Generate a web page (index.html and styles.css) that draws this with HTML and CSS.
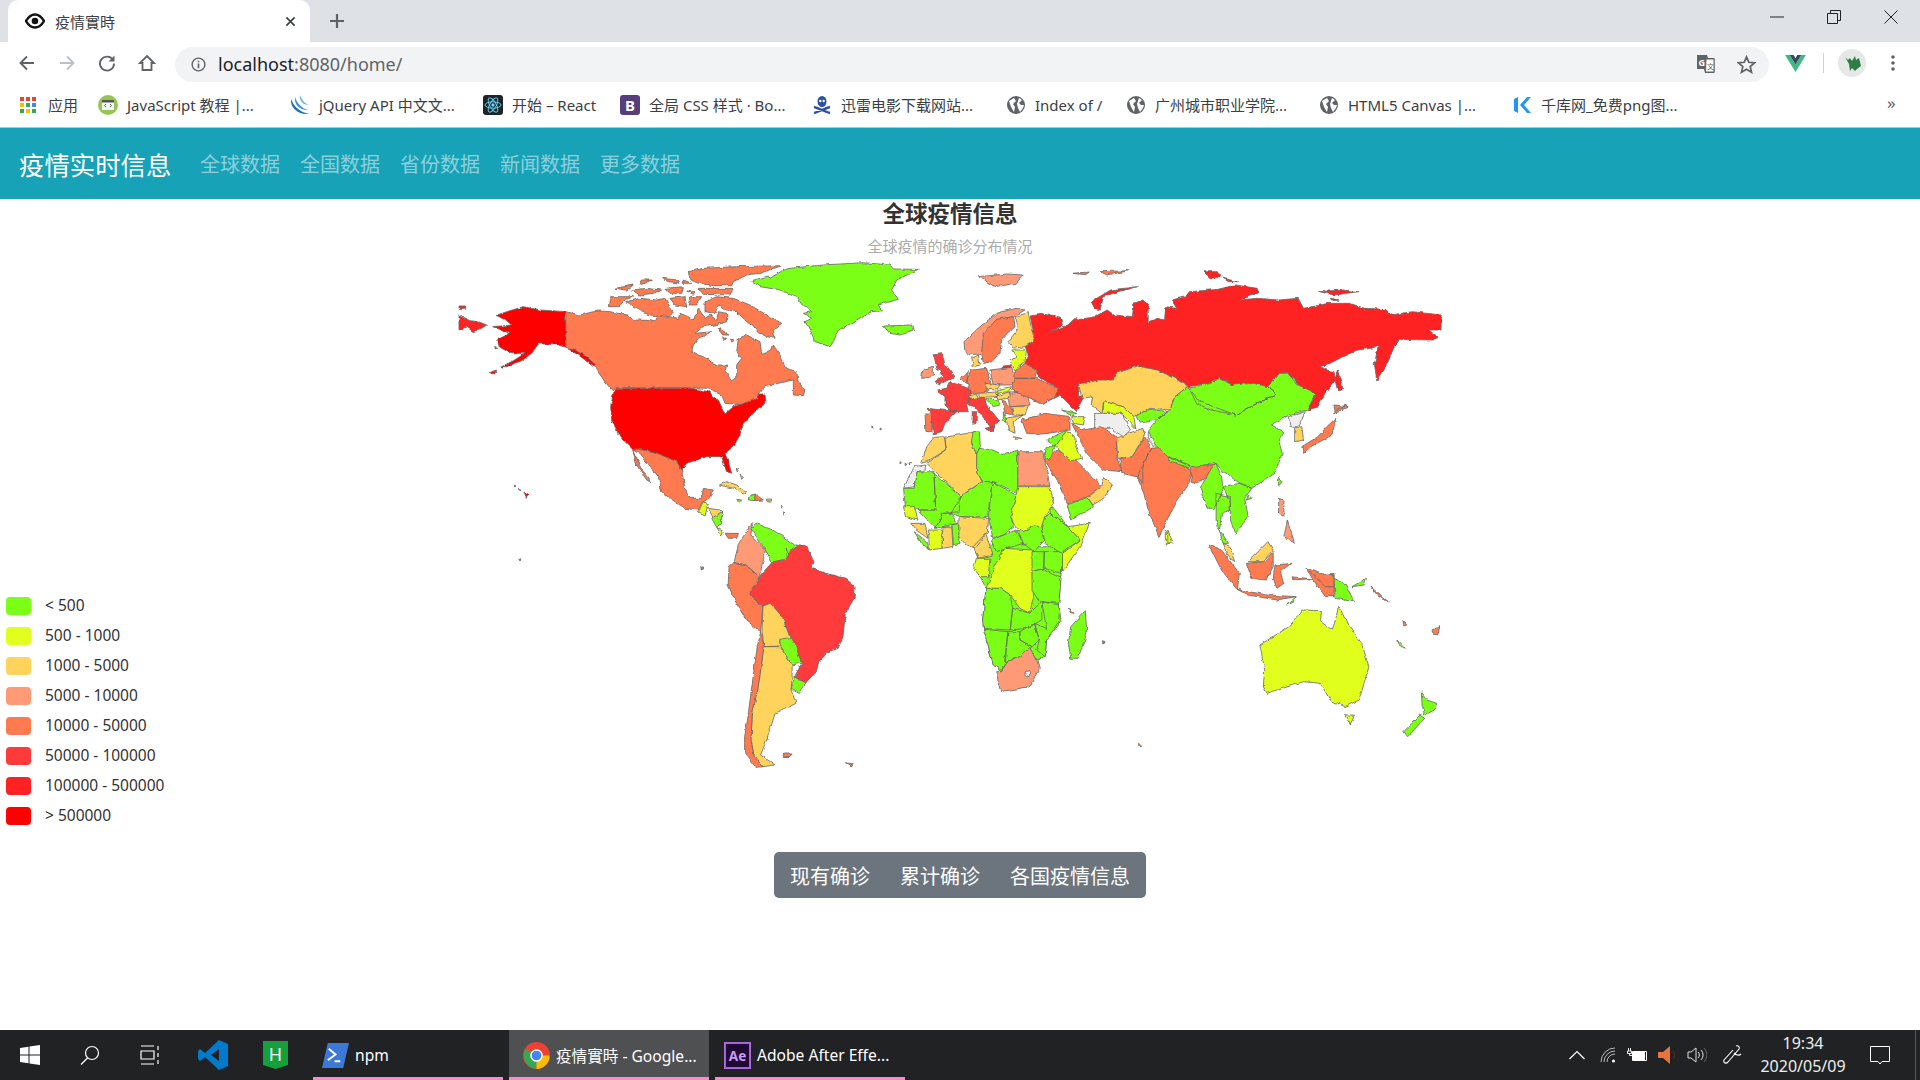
FILE: index.html
```html
<!DOCTYPE html>
<html lang="zh-CN">
<head>
    <meta charset="UTF-8" />
    <title>疫情實時</title>
    <link rel="stylesheet" href="styles.css">
</head>

<body>
    <header class="browser">
        <div class="tabstrip">
            <div class="tab">
                <svg class="tab-icon" viewBox="0 0 20 20"><path d="M1 10C4 5 7 3.500 10 3.500S16 5 19 10C16 15 13 16.500 10 16.500S4 15 1 10Z" fill="none" stroke="#111" stroke-width="2.400"/><circle cx="10" cy="10" r="3.300" fill="#111"/></svg>
                <span class="tab-title">疫情實時</span>
                <svg class="tab-close" viewBox="0 0 12 12"><path d="M1.500 1.500 10.500 10.500M10.500 1.500 1.500 10.500" stroke="#3c4043" stroke-width="1.800"/></svg>
            </div>
            <svg class="tab-new" viewBox="0 0 16 16"><path d="M8 1V15M1 8H15" stroke="#5f6368" stroke-width="2.200"/></svg>
            <div class="window-btns">
                <svg viewBox="0 0 14 14"><path d="M0 7H14" stroke="#222" stroke-width="1"/></svg>
                <svg viewBox="0 0 14 14"><path d="M.5 3.500H10.500V13.500H.5ZM3.500 3.500V.5H13.500V10.500H10.500" fill="none" stroke="#222" stroke-width="1"/></svg>
                <svg viewBox="0 0 14 14"><path d="M.5 .5 13.500 13.500M13.500 .5 .5 13.500" stroke="#222" stroke-width="1"/></svg>
            </div>
        </div>

        <div class="toolbar">
            <svg class="tool" viewBox="0 0 18 18"><path d="M16 9H3M9 2.500 2.500 9 9 15.500" fill="none" stroke="#5f6368" stroke-width="1.900"/></svg>
            <svg class="tool" viewBox="0 0 18 18"><path d="M2 9H15M9 2.500 15.500 9 9 15.500" fill="none" stroke="#bdc1c6" stroke-width="1.900"/></svg>
            <svg class="tool" viewBox="0 0 18 18"><path d="M15 6A7 7 0 1 0 16 9.500" fill="none" stroke="#5f6368" stroke-width="1.900"/><path d="M16.500 1.500V7.500H10.500Z" fill="#5f6368"/></svg>
            <svg class="tool" viewBox="0 0 18 18"><path d="M9 2 16 9H13.500V16H4.500V9H2Z" fill="none" stroke="#5f6368" stroke-width="1.800"/></svg>
            <div class="omnibox">
                <svg class="info" viewBox="0 0 16 16"><circle cx="8" cy="8" r="6.800" fill="none" stroke="#5f6368" stroke-width="1.500"/><path d="M8 7V12M8 4V5.600" stroke="#5f6368" stroke-width="1.700"/></svg>
                <span class="url">localhost<span class="url-rest">:8080/home/</span></span>
                <svg class="omni-translate" viewBox="0 0 20 20"><path d="M1 1H11L12 4H18.500V19H9L8 15H1Z" fill="#5f6368"/><path d="M10 5H18V18H9.500Z" fill="#fff" stroke="#5f6368"/><text x="2.500" y="11.500" class="tr-g">G</text><text x="11" y="15" class="tr-x">文</text></svg>
                <svg class="omni-star" viewBox="0 0 20 20"><path d="M10 2 12.400 7.700 18.500 8.200 13.900 12.200 15.300 18.200 10 15 4.700 18.200 6.100 12.200 1.500 8.200 7.600 7.700Z" fill="none" stroke="#5f6368" stroke-width="1.800"/></svg>
            </div>
            <svg class="ext-vue" viewBox="0 0 22 20"><path d="M0 1H5L11 11 17 1H22L11 19Z" fill="#41b883"/><path d="M5 1H9L11 4.500 13 1H17L11 11Z" fill="#35495e"/></svg>
            <span class="tool-sep"></span>
            <svg class="avatar" viewBox="0 0 28 28"><circle cx="14" cy="14" r="14" fill="#e6e8e6"/><path d="M7 8 10 11 12 9 14 12 17 7 18 11 21 9 23 17 19 20 17 22 14 19 12 22 11 15Z" fill="#2e7d46"/></svg>
            <svg class="dots" viewBox="0 0 6 18"><circle cx="3" cy="3" r="1.800" fill="#5f6368"/><circle cx="3" cy="9" r="1.800" fill="#5f6368"/><circle cx="3" cy="15" r="1.800" fill="#5f6368"/></svg>
        </div>

        <nav class="bookmarks">
            <a class="mark mark-apps">
                <svg class="mark-icon-sm" viewBox="0 0 16 16"><rect width="4" height="4" fill="#ea4335"/><rect x="6" width="4" height="4" fill="#ea4335"/><rect x="12" width="4" height="4" fill="#ea4335"/><rect y="6" width="4" height="4" fill="#fbbc05"/><rect x="6" y="6" width="4" height="4" fill="#34a853"/><rect x="12" y="6" width="4" height="4" fill="#4285f4"/><rect y="12" width="4" height="4" fill="#34a853"/><rect x="6" y="12" width="4" height="4" fill="#fbbc05"/><rect x="12" y="12" width="4" height="4" fill="#34a853"/></svg>
                应用
            </a>
            <a class="mark mark-js">
                <svg class="mark-icon" viewBox="0 0 20 20"><circle cx="10" cy="10" r="10" fill="#95c653"/><rect x="4" y="5" width="12" height="10" fill="#f4f6f1"/><rect x="4" y="5" width="12" height="2.500" fill="#555"/><path d="M8 9 6.500 10.500 8 12M12 9 13.500 10.500 12 12" fill="none" stroke="#555"/></svg>
                JavaScript 教程 |...
            </a>
            <a class="mark mark-jq">
                <svg class="mark-icon" viewBox="0 0 20 20"><path d="M1 4C0 12 7 20 19 19 10 17 4 12 1 4Z" fill="#1b6fb5"/><path d="M5 2C4 9 9 15 18 15 11 13 7 8 5 2Z" fill="#3a93d6"/><path d="M10 0C9 6 13 10 19 10 14 8 12 5 10 0Z" fill="#6cb4e4"/></svg>
                jQuery API 中文文...
            </a>
            <a class="mark mark-react">
                <svg class="mark-icon" viewBox="0 0 20 20"><rect width="20" height="20" rx="3" fill="#20232a"/><circle cx="10" cy="10" r="1.700" fill="#61dafb"/><g fill="none" stroke="#61dafb" stroke-width=".9"><ellipse cx="10" cy="10" rx="8" ry="3.200"/><ellipse cx="10" cy="10" rx="8" ry="3.200" transform="rotate(60 10 10)"/><ellipse cx="10" cy="10" rx="8" ry="3.200" transform="rotate(120 10 10)"/></g></svg>
                开始 – React
            </a>
            <a class="mark mark-bs">
                <svg class="mark-icon" viewBox="0 0 20 20"><rect width="20" height="20" rx="3" fill="#563d7c"/><text x="10" y="16" class="bs-letter">B</text></svg>
                全局 CSS 样式 · Bo...
            </a>
            <a class="mark mark-xl">
                <svg class="mark-icon" viewBox="0 0 20 20"><ellipse cx="10" cy="6.500" rx="4.500" ry="5.500" fill="#2c4f9e"/><circle cx="8.300" cy="6" r="1.200" fill="#fff"/><circle cx="11.700" cy="6" r="1.200" fill="#fff"/><path d="M2 12C6 13 14 17 18 18M18 12C14 13 6 17 2 18" fill="none" stroke="#2c4f9e" stroke-width="2.400"/></svg>
                迅雷电影下载网站...
            </a>
            <a class="mark mark-idx">
                <svg class="mark-icon" viewBox="0 0 20 20"><use href="#globe"/></svg>
                Index of /
            </a>
            <a class="mark mark-gz">
                <svg class="mark-icon" viewBox="0 0 20 20"><use href="#globe"/></svg>
                广州城市职业学院...
            </a>
            <a class="mark mark-h5">
                <svg class="mark-icon" viewBox="0 0 20 20"><use href="#globe"/></svg>
                HTML5 Canvas |...
            </a>
            <a class="mark mark-qk">
                <svg class="mark-icon" viewBox="0 0 20 20"><path d="M2 4 6 2V18L2 16ZM15 2H19L12 10 19 18H15L8 10Z" fill="#2196f3"/></svg>
                千库网_免费png图...
            </a>
            <span class="mark-more">»</span>
        </nav>
        <svg class="defs" width="0" height="0"><defs><g id="globe"><circle cx="10" cy="10" r="9" fill="#5f6368"/><path d="M3 6 8 3 10 6 7 9 9 12 8 17 5 12ZM13 3 16 5 13 8 15 10H18L17 13 14 17 12 13 11 9Z" fill="#fff"/></g></defs></svg>
    </header>

    <div class="navbar">
        <span class="brand">疫情实时信息</span>
        <a class="nav-link">全球数据</a>
        <a class="nav-link">全国数据</a>
        <a class="nav-link">省份数据</a>
        <a class="nav-link">新闻数据</a>
        <a class="nav-link">更多数据</a>
    </div>

    <main class="page">
        <section class="chart">
            <h1 class="chart-title">全球疫情信息</h1>
            <p class="chart-sub">全球疫情的确诊分布情况</p>

            <svg class="worldmap" viewBox="450 255 1000 520" width="1000" height="520">
                <defs>
                    <filter id="coast" filterUnits="userSpaceOnUse" x="450" y="255" width="1000" height="520">
                        <feTurbulence type="fractalNoise" baseFrequency=".16" numOctaves="2" seed="4" result="noise"/>
                        <feDisplacementMap in="SourceGraphic" in2="noise" scale="3.500" xChannelSelector="R" yChannelSelector="G"/>
                        <feGaussianBlur stdDeviation=".4"/>
                    </filter>
                </defs>
                <g filter="url(#coast)">
                <!-- canada -->
                <g transform="translate(590 255) scale(.33333)">
                    <path class="c5" d="M-73 170 -30 180 10 170 30 168 60 170 85 175 110 180 125 190 140 195 170 196 195 200 205 180 225 188 240 185 265 190 270 175 295 185 310 195 325 160 345 190 360 180 380 195 385 170 410 175 410 200 375 210 340 215 315 235 365 230 345 240 325 250 310 270 305 290 325 300 340 305 365 322 385 330 410 330 405 350 425 378 440 365 440 330 455 310 440 290 445 250 470 240 490 250 510 260 515 295 545 285 550 270 570 300 590 340 620 350 625 380 645 405 640 422 610 420 610 375 585 380 565 385 525 395 505 420 510 430 465 450 405 445 395 420 350 400 300 398H75L65 405 45 380 20 345 0 315 -35 295 -73 277Z"/>
                    <path class="c5" d="M345 140 380 125 430 130 455 140 480 150 505 165 530 180 575 205 550 225 555 250 530 245 510 235 490 215 470 200 440 170 410 165 385 150 375 175 345 170ZM385 220 420 240H395ZM395 248 410 250 400 256ZM422 252 433 255 426 262ZM60 125H130L105 135 85 155H55ZM110 140 150 130 200 135 225 130 250 175 240 185 180 180 140 160ZM75 100 130 90 110 105ZM125 105 170 100 215 105 190 115 150 120ZM215 70 265 75 270 85 235 80ZM155 75H185L150 90ZM280 75 305 85H280ZM225 100 280 95 275 115H240ZM240 130 285 125 290 155 255 150ZM300 125H335L320 150H295ZM295 50 340 40 440 35 575 32 510 55 470 60 430 80 425 92 370 92 330 85 300 75ZM325 100H430L420 120 340 118ZM290 108 315 110 310 118Z"/>
                </g>

                <!-- rest of the americas -->
                <g transform="translate(450 190) scale(.33333)">
                    <path class="c7" d="M27 377 60 392 85 395 110 405 95 415 70 425 50 410 27 420ZM27 348H47V355H27Z"/>
                    <path class="c8" d="M347 365V472L375 478 410 500 437 525 430 530 405 510 385 495 347 472 320 465 290 462 265 462 245 490 215 512 170 530 155 530 190 512 225 490 200 490 175 487 148 470 140 450 180 430 160 422 128 410 185 405 165 388 138 376 180 362 220 350 270 360ZM115 548 140 540 130 552ZM150 532 165 528 158 535ZM133 470 147 472 140 477ZM222 906 235 912 229 922Z"/>
                    <path class="c1" d="M905 272 955 258 960 265 1000 240 1020 235 1120 225 1240 218 1320 225 1330 237 1405 238 1340 270 1325 300 1345 328 1320 335 1285 345 1300 362 1265 365 1240 378 1195 405 1165 420 1150 455 1140 470 1095 455 1085 430 1065 395 1085 385 1060 370 1085 365 1060 345 1040 320 990 300 930 290ZM1300 408 1385 405 1390 420 1350 435 1320 430Z"/>
                    <path class="c8" d="M497 595H725L775 605 805 630 825 672 850 650 895 635 925 625V612H945L948 640 925 655 900 680 880 700 870 735 850 770 825 790 835 815 845 850 830 845 815 800H770L710 820 695 840 680 815 645 800 610 785 545 775 510 740 485 690 482 650 490 610Z"/>
                    <path class="c5" d="M545 775 610 785 645 800 680 815 695 840 705 900 720 925 755 925 760 895 790 900 775 925 755 940 745 960 705 955 660 925 635 905 625 860 570 790ZM548 778 575 840 605 878 590 870 560 825Z"/>
                    <path class="c2" d="M745 965 760 935 775 945 765 975ZM800 1012 820 1025 815 1035Z"/>
                    <path class="c3" d="M775 955 810 960 820 970 790 985ZM808 885 830 875 860 885 890 905 880 912 850 895Z"/>
                    <path class="c1" d="M785 985 815 965V1005L800 1012ZM895 920 915 912V932L895 930ZM860 928 875 930 868 936ZM858 835 868 840 862 846ZM870 855 880 862 875 868Z"/>
                    <path class="c5" d="M825 1030H865L860 1045H835ZM915 912 940 930 915 932Z"/>
                    <path class="c3" d="M950 927H965V933H950Z"/>
                    <path class="c5" d="M192 885 198 888 194 891ZM205 895 212 899 207 903ZM995 945 1000 950 996 955ZM998 965 1003 970 998 975ZM1350 815 1356 820 1350 825ZM1365 820 1371 823 1366 827ZM1380 815 1385 818 1380 822ZM1265 708 1270 711 1266 714ZM1290 714 1295 717 1291 720ZM210 1106 216 1109 211 1112ZM752 1130 762 1136 754 1140Z"/>
                </g>

                <!-- south america, southern africa, oceania -->
                <g transform="translate(700 480) scale(.48473 .33333)">
                    <path class="c4" d="M108 128 105 165 135 210 130 245 122 290 95 255 70 248 80 190Z"/>
                    <path class="c1" d="M105 145 115 130 150 150 172 170 195 195 215 197 205 230 185 238 178 205 180 235 155 245 150 248 135 210Z"/>
                    <path class="c5" d="M60 260 70 248 95 255 122 290 118 305 102 345 130 378 125 455 95 420 75 370 58 315Z"/>
                    <path class="c6" d="M220 200 235 245 230 265 260 280 300 295 320 320 318 355 300 400 295 470 285 505 265 515 245 545 240 575 218 612 195 590 210 550 190 490 170 410 145 370 130 378 102 345 118 305 125 285 150 245 178 240 185 215 205 195Z"/>
                    <path class="c3" d="M145 370 170 410 190 490 165 478V498L132 500 128 455 130 378ZM132 500H165L190 555V590L188 630 198 670 155 700 140 770 125 825 155 855 130 860 112 830 105 780 108 700 120 620Z"/>
                    <path class="c1" d="M165 478 190 472 210 550 190 555 165 498ZM195 590 218 612 205 640 188 628Z"/>
                    <path class="c5" d="M125 455 132 500 120 620 108 700 105 780 112 830 130 860 115 862 92 820V770L98 720 105 640 118 500Z"/>
                    <path class="c5" d="M172 822H190L185 830H172ZM300 848 315 852 312 858Z"/>

                    <path class="c1" d="M570 210 620 180 700 200H760L745 280 740 370 745 425 715 480 712 530 695 540 680 503 660 530 635 545 622 572 605 555 585 448 583 420 590 325 578 290Z"/>
                    <path class="c2" d="M625 205 690 210 685 280 688 350 680 400 660 385 640 345 620 325H590L605 270ZM570 235H598L595 290H578L565 265Z"/>
                    <path class="c1" d="M710 215H750L745 280 710 265ZM685 275 710 270 745 295 740 370 700 365 685 330ZM685 215H710L708 270 685 275ZM590 325H620L640 345 645 385 640 450 585 445 583 420ZM645 385 680 400 705 365V420L675 445 640 450ZM660 455 690 430 700 480 685 500 660 480ZM705 365 742 375 740 425 715 480 712 530 695 510 700 480 690 430 715 445ZM585 448 635 455 628 550 622 572 605 555ZM635 455H660V480L685 500 660 530 630 548ZM795 392 798 460 780 535H765L760 490 765 440Z"/>
                    <path class="c4" d="M622 572 635 545 660 530 680 503 695 540 700 565 680 620 620 635 610 575Z"/>
                    <ellipse class="blank" cx="675" cy="582" rx="5" ry="9"/>
                    <path class="c2" d="M960 150 975 185 960 195Z"/>

                    <path class="c5" d="M1108 328 1170 345 1230 350 1190 360 1130 345ZM1250 265 1280 285 1308 280V350H1290L1270 310ZM1220 290 1260 296 1225 300Z"/>
                    <path class="c1" d="M1308 295 1330 310 1350 365 1310 355ZM1345 320 1375 295 1370 315ZM1210 375 1230 350 1222 368ZM1440 480 1455 505 1442 495Z"/>
                    <path class="c2" d="M1155 495 1215 440 1245 390 1282 392 1280 425 1305 450 1318 378 1335 430 1365 490 1380 560 1360 660 1330 680 1300 660 1280 610 1245 605 1170 640 1162 620 1165 570ZM1330 705H1350L1342 735Z"/>
                    <path class="c1" d="M1488 635 1500 660 1520 670 1515 690 1495 705 1490 680ZM1485 705 1495 715 1460 770 1452 755Z"/>
                    <path class="c5" d="M905 790 912 800 902 798ZM1380 315 1395 335 1420 365 1400 350ZM1510 450 1526 437 1522 465 1512 462ZM830 485 836 488 831 492ZM1450 420 1458 435 1452 438ZM760 385 772 400 764 398Z"/>
                </g>

                <!-- asia, northern africa -->
                <g transform="translate(900 250) scale(.35714 .33333)">
                    <path class="c3" d="M60 640 75 590 95 562 125 560 130 600 75 635ZM75 640 130 600 125 562 215 545 200 575 215 610V665L230 695 170 738Z"/>
                    <path class="blank" d="M10 715 40 650 72 645 70 660 45 665 40 710Z"/>
                    <path class="c1" d="M205 545H222L225 590 213 612 200 575ZM222 595 260 600 290 615 330 600V730L260 695H232L215 665V610ZM10 715H40L45 665H95L100 780H55L15 770ZM95 670 170 738 165 785 120 790 100 835 50 780H100ZM170 740 230 695H258L245 800H165L143 790ZM258 695 325 735 310 800 320 830 290 855 260 865 248 800ZM100 835 120 790H143L160 820 120 830ZM145 825 165 820V880L150 885ZM40 845 75 875 85 900 60 880ZM255 870 290 855 325 840 345 880 300 895 270 905ZM328 840 345 845 380 825 395 835 405 870 375 905 345 880ZM420 790 470 830 505 870 450 908 405 880 395 835 405 800ZM420 760 470 830 420 790Z"/>
                    <path class="c4" d="M330 605H400L410 660 420 708H330Z"/>
                    <path class="c2" d="M330 710H420L430 760 405 800 395 835 380 825 345 845 322 825 310 800 325 735ZM10 770H40L50 810 15 800ZM80 840H118V895L82 900ZM470 830 530 820 510 880 455 965V910L505 870Z"/>
                    <path class="c3" d="M30 820H70L78 865 45 840ZM120 830H145L148 890 118 895ZM165 800 248 805 245 845 212 895 185 885 165 860ZM205 890 240 850 260 915 220 925Z"/>

                    <path class="c7" d="M364 195 395 190 450 205 455 225 420 245 445 235 470 225 490 205 495 210 545 200 580 180 600 195 650 200 655 160 680 150 695 165V220L720 205 740 210 745 170 775 175 760 150 800 140 810 125 890 118 940 105 1000 115 1005 128 950 150 1000 145 1060 150 1115 145 1130 175 1200 160 1260 160 1300 175 1360 178 1375 195 1435 185 1515 195V240H1480L1508 262 1490 270 1395 268 1380 300 1365 340 1335 390 1328 340 1335 310 1345 285 1320 295 1280 300 1240 320 1195 345 1178 350 1195 360 1215 365 1220 390 1190 430 1170 470 1140 480 1165 430 1135 430 1115 405 1085 368 1060 370 1030 410 990 400 930 405 895 385 860 400 810 410 770 385 720 360 665 348 605 370 600 390 555 390 500 405V440L520 430 500 470 495 485 448 435 420 450 401 462 434 440 443 415 387 380 383 360 350 340 359 320 355 300 350 290 378 270ZM1225 360 1240 415 1225 420 1218 390ZM850 65H885L905 80 870 85ZM905 85 945 95H920ZM535 155 590 120 665 110 610 125 570 140 560 180 545 175ZM1175 125 1240 120 1285 125 1215 135ZM1205 145 1230 150 1210 152Z"/>
                    <path class="c4" d="M220 80 300 72 345 75 325 100 265 110ZM1060 745 1075 750V800L1060 790ZM1085 810 1105 880 1075 860Z"/>
                    <path class="c5" d="M480 70 530 66 520 74ZM560 65 640 62 580 75ZM615 625 650 620 685 560 705 595 680 640V700L665 680 620 670ZM680 640 705 595 745 590 750 620 815 660 810 700 775 755 750 805 725 860 695 780 680 720 665 685ZM815 645H880L850 690 815 700ZM1210 490 1250 465 1220 480ZM1220 505 1210 555 1150 590 1130 610 1125 590 1170 560 1195 530ZM1215 465 1255 470 1220 490ZM865 885 900 900 950 970 945 1020 900 960ZM970 940 1020 935 1045 905V950L1025 990 985 985ZM1050 945 1095 940 1065 965 1075 1000 1055 1015 1045 985ZM1140 955 1175 970 1215 975V1010H1190ZM405 630 440 600 490 628 520 660 565 710 525 740 470 762 440 690Z"/>
                    <path class="c3" d="M500 405 555 390H600L605 370 665 348 720 360 770 385 805 410 770 440 755 480 700 475 655 500 625 470 570 455 565 490 535 465 540 440 510 445ZM605 565 640 550 680 535 685 555 650 620 610 625ZM570 680 595 705 570 745 540 765 525 742 565 710ZM1105 535 1125 530 1130 570 1105 575ZM905 880 925 890 940 935 915 915ZM975 935 1030 875 1045 900 1015 935Z"/>
                    <path class="c2" d="M570 455 625 470 655 500 660 535 620 490H570ZM750 840 765 880H750Z"/>
                    <path class="blank" d="M545 490H620L645 540 625 560 590 535H545ZM695 545 725 560 740 590H715L695 570ZM1090 500 1135 485 1115 535 1095 530Z"/>
                    <path class="c1" d="M660 495 700 478 750 485 720 510 670 520ZM468 765 525 742 542 770 480 810ZM755 620 810 645 812 655 750 630ZM805 410 840 455 940 495 1000 460 1055 435 1030 410 1060 370H1085L1115 405 1165 430 1140 480 1090 495 1040 525 1075 545 1060 570 1070 610 1050 670 985 715 945 695 900 660 885 640 815 650 750 620 715 585 695 545 720 510 755 480 770 440ZM810 415 860 400 895 385 930 405 990 400 1030 410 1055 435 1000 460 940 495 870 480 830 460ZM885 640 900 680 905 720 880 775H860L840 715 875 650ZM885 730 925 740V780L900 790 895 840 920 880H905L885 810ZM905 710 950 700 985 715 965 745 975 800 940 850 925 810V760ZM1060 680 1070 700 1060 710ZM975 735 985 745 970 750Z"/>
                </g>

                <!-- europe, middle east -->
                <g transform="translate(900 290) scale(.33333)">
                    <path class="c5" d="M515 400 550 420 605 410 650 440V500L665 545 610 540 560 490ZM365 390 435 370 510 380V420L430 432 380 430Z"/>
                    <path class="c7" d="M310 228 335 225V235H310Z"/>
                    <path class="c6" d="M100 192 125 188 135 222 150 240 165 260 120 282 105 275 128 258 122 240 110 235 105 210ZM110 300 140 295 150 275 205 295 215 320 200 345 205 365H150L135 345V320ZM80 355 170 365 135 400 125 425 100 432 93 370ZM205 325 250 320 260 345 300 395 285 400 280 425 260 395 225 350 205 345ZM255 415 285 408 275 428ZM220 365H230L228 400 218 403Z"/>
                    <path class="c4" d="M68 240 100 228V258L85 262 65 265ZM192 155 240 110 290 70 345 55 375 60 340 80 290 90 255 130 245 190 210 195 195 185ZM270 240 335 232 345 265V285H280ZM320 310 380 305 390 345 330 350Z"/>
                    <path class="c5" d="M250 130 290 88 340 80 345 110 305 150 300 190 275 215 250 220 245 190ZM345 245 375 220 410 240 405 265H345ZM215 240 260 235 275 285 265 300 250 310H210L200 270ZM180 265 205 245 200 280ZM345 265H410L475 295 465 320 430 342 380 320 335 300ZM75 372H95V425H78ZM305 325 330 350 340 375 315 370Z"/>
                    <path class="c3" d="M345 80 385 68 395 120 405 150 375 170 340 175 325 155 355 115ZM215 205 235 195 240 225 220 230ZM205 318 230 312 235 322 215 328ZM255 280 300 285 290 300 260 298ZM235 310 300 305 290 320 240 322ZM290 318 330 305 325 325 290 330ZM335 350H385L375 375H340ZM318 385 370 375 340 395 345 430 325 420ZM340 440 365 445 345 448Z"/>
                    <path class="c2" d="M335 180H380L375 215 345 240 330 212 350 200ZM295 298 335 290 325 305 290 310ZM515 380H555L550 405 520 400ZM465 470 495 425 520 430 530 470 545 505 515 512Z"/>
                    <path class="c1" d="M255 325 290 330 300 345 280 350ZM310 365 320 395H310ZM485 360 530 370 510 375ZM440 450 490 425 500 425 465 470ZM435 470H465L450 510 432 505Z"/>
                </g>
                </g>
            </svg>

            <ul class="legend">
                <li><i class="swatch sw1"></i>&lt; 500</li>
                <li><i class="swatch sw2"></i>500 - 1000</li>
                <li><i class="swatch sw3"></i>1000 - 5000</li>
                <li><i class="swatch sw4"></i>5000 - 10000</li>
                <li><i class="swatch sw5"></i>10000 - 50000</li>
                <li><i class="swatch sw6"></i>50000 - 100000</li>
                <li><i class="swatch sw7"></i>100000 - 500000</li>
                <li><i class="swatch sw8"></i>&gt; 500000</li>
            </ul>
        </section>

        <div class="btn-group">
            <button>现有确诊</button>
            <button>累计确诊</button>
            <button>各国疫情信息</button>
        </div>
    </main>

    <footer class="taskbar">
        <svg class="tb-win" viewBox="0 0 20 20"><path d="M0 3 8.500 1.800V9.500H0ZM9.500 1.600 20 0V9.500H9.500ZM0 10.500H8.500V18.200L0 17ZM9.500 10.500H20V20L9.500 18.400Z" fill="#fff"/></svg>
        <svg class="tb-search" viewBox="0 0 20 20"><circle cx="12" cy="8" r="6.500" fill="none" stroke="#fff" stroke-width="1.200"/><path d="M7.500 13 1 19.500" stroke="#fff" stroke-width="1.200"/></svg>
        <svg class="tb-tasks" viewBox="0 0 20 20"><path d="M1 1H14M1 19H14M1 6H14V14H1ZM18 1V5M18 8V12M18 15V19" fill="none" stroke="#fff" stroke-width="1.200"/></svg>
        <svg class="tb-code" viewBox="0 0 30 30"><path d="M21 0 30 4V26L21 30 7 17 2 21 0 19V11L2 9 7 13ZM21 9 13 15 21 21Z" fill="#007acc" fill-rule="evenodd"/></svg>
        <svg class="tb-hb" viewBox="0 0 25 28"><path d="M0 0H25V24L12.500 28 0 24Z" fill="#16a03c"/><text x="12.500" y="20" class="hb-letter">H</text></svg>
        <div class="tb-app tb-npm">
            <svg class="tb-app-icon" viewBox="0 0 28 26"><path d="M6 0H28L22 26H0Z" fill="#3b78d8"/><path d="M7 6 14 12 6 18M13 19H19" fill="none" stroke="#fff" stroke-width="2"/></svg>
            npm
        </div>
        <div class="tb-app tb-chrome">
            <svg class="tb-app-icon" viewBox="0 0 28 28"><circle cx="14" cy="14" r="14" fill="#ea4335"/><path d="M14 14 1.900 7 1 14C1 21 6 27 14 28Z" fill="#34a853"/><path d="M14 14H27.500C28 21 22 28 14 28Z" fill="#fbbc05"/><circle cx="14" cy="14" r="6.500" fill="#fff"/><circle cx="14" cy="14" r="5" fill="#4285f4"/></svg>
            疫情實時 - Google...
        </div>
        <div class="tb-app tb-ae">
            <svg class="tb-app-icon" viewBox="0 0 28 28"><rect x="1" y="1" width="26" height="26" fill="#1f0a33" stroke="#a76de0" stroke-width="2"/><text x="14" y="20" class="ae-letter">Ae</text></svg>
            Adobe After Effe...
        </div>

        <div class="tray">
            <svg class="tr-chev" viewBox="0 0 16 10"><path d="M.5 9 8 1.500 15.500 9" fill="none" stroke="#fff" stroke-width="1.200"/></svg>
            <svg class="tr-wifi" viewBox="0 0 16 16"><path d="M1 15A14 14 0 0 1 15 1M4 15A11 11 0 0 1 15 4M7 15A8 8 0 0 1 15 7" fill="none" stroke="#bbb" stroke-width="1"/><circle cx="13.500" cy="14" r="1.500" fill="#fff"/></svg>
            <svg class="tr-batt" viewBox="0 0 20 14"><path d="M5.500 3.500H19.500V12.500H5.500Z" fill="none" stroke="#fff"/><path d="M6 4H18V12H6Z" fill="#fff"/><path d="M1.500 0V3M3.500 0V3M.5 3H4.500V5.500H.5ZM2.500 5.500V7.500H5" fill="none" stroke="#fff" stroke-width=".9"/></svg>
            <svg class="tr-red" viewBox="0 0 18 18"><path d="M0 6H5L12 0V18L5 12H0Z" fill="#e8743b"/><path d="M15 5A6 6 0 0 1 15 13" fill="none" stroke="#5a2a1a"/></svg>
            <svg class="tr-vol" viewBox="0 0 20 16"><path d="M1 5H4L9 1V15L4 11H1ZM11 5A4 4 0 0 1 11 11M14 3A7 7 0 0 1 14 13" fill="none" stroke="#ddd"/><path d="M17 1A10 10 0 0 1 17 15" fill="none" stroke="#666"/></svg>
            <svg class="tr-pen" viewBox="0 0 20 20"><path d="M14 1C16 0 18 2 17 4L6 17C4 19 1 18 2 15L11 5M12 8C14 10 17 11 19 9" fill="none" stroke="#fff" stroke-width="1.100"/></svg>
            <div class="clock"><span>19:34</span><span>2020/05/09</span></div>
            <svg class="tr-note" viewBox="0 0 20 19"><path d="M.5 .5H19.500V15.500H12L10 18 8 15.500H.5Z" fill="none" stroke="#fff"/></svg>
            <span class="tr-edge"></span>
        </div>
    </footer>
</body>

</html>
```

FILE: styles.css
```css
* {
    box-sizing: border-box;
}

html,
body {
    margin: 0;
    height: 100%;
    background: #fff;
    font-family: "Noto Sans", "Noto Sans CJK SC", sans-serif;
    overflow: hidden;
}

body {
    display: flex;
    flex-direction: column;
    height: 1080px;
}

/* browser */
.browser {
    flex: none;
    height: 128px;
    border-bottom: 1px solid #a9cdd4;
}

.defs {
    position: absolute;
}

.tabstrip {
    height: 42px;
    background: #dee1e6;
    display: flex;
    align-items: center;
    padding-left: 8px;
}

.tab {
    width: 302px;
    height: 42px;
    background: #fff;
    border-radius: 10px 10px 0 0;
    display: flex;
    align-items: center;
    padding-left: 17px;
}

.tab-icon {
    width: 20px;
    height: 20px;
}

.tab-title {
    margin-left: 10px;
    font-size: 15px;
    color: #3c4043;
    flex: 1;
}

.tab-close {
    width: 11px;
    height: 11px;
    margin-right: 14px;
}

.tab-new {
    width: 16px;
    height: 16px;
    margin-left: 19px;
}

.window-btns {
    margin-left: auto;
    display: flex;
    align-items: center;
    gap: 43px;
    padding-right: 22px;
    padding-bottom: 8px;
}

.window-btns svg {
    width: 14px;
    height: 14px;
}

.toolbar {
    height: 42px;
    display: flex;
    align-items: center;
    padding: 0 18px 0 18px;
}

.tool {
    width: 18px;
    height: 18px;
    margin-right: 22px;
}

.omnibox {
    width: 1594px;
    height: 35px;
    margin-left: -3px;
    margin-top: 2px;
    border-radius: 18px;
    background: #f1f3f4;
    display: flex;
    align-items: center;
    padding-left: 16px;
}

.info {
    width: 15px;
    height: 15px;
}

.url {
    margin-left: 12px;
    font-size: 18px;
    color: #202124;
    flex: 1;
}

.url-rest {
    color: #5f6368;
}

.omni-translate {
    width: 20px;
    height: 20px;
}

.tr-g {
    font-size: 9px;
    font-weight: 700;
    fill: #fff;
}

.tr-x {
    font-size: 7px;
    fill: #5f6368;
}

.omni-star {
    width: 19px;
    height: 19px;
    margin: 0 13px 0 21px;
}

.ext-vue {
    width: 21px;
    height: 19px;
    margin-left: 16px;
}

.tool-sep {
    width: 1px;
    height: 20px;
    margin-left: 17px;
    background: #d0d3d6;
}

.avatar {
    width: 28px;
    height: 28px;
    margin-left: 14px;
}

.dots {
    width: 6px;
    height: 18px;
    margin-left: 24px;
}

.bookmarks {
    height: 43px;
    display: flex;
    align-items: center;
    font-size: 15px;
    color: #3c4043;
    padding-left: 20px;
    padding-bottom: 2px;
}

.mark {
    display: flex;
    align-items: center;
    gap: 9px;
    white-space: nowrap;
}

.mark-icon-sm {
    width: 16px;
    height: 16px;
}

.mark-icon {
    width: 20px;
    height: 20px;
}

.mark-apps {
    width: 78px;
    gap: 12px;
}

.mark-js {
    width: 192px;
}

.mark-jq {
    width: 193px;
}

.mark-react {
    width: 137px;
}

.mark-bs {
    width: 192px;
}

.mark-xl {
    width: 194px;
}

.mark-idx {
    width: 120px;
}

.mark-gz {
    width: 193px;
}

.mark-h5 {
    width: 193px;
}

.mark-qk {
    width: 375px;
}

.mark-more {
    font-size: 17px;
    color: #5f6368;
    margin-top: -4px;
}

/* page */
.navbar {
    flex: none;
    height: 71px;
    background: #17a2b8;
    display: flex;
    align-items: center;
    padding-left: 19px;
}

.brand {
    font-size: 25.400px;
    color: #fff;
    margin-right: 10px;
    width: 171px;
}

.nav-link {
    font-size: 20px;
    color: rgba(255, 255, 255, .5);
    width: 100px;
}

.page {
    flex: 1;
}

.chart {
    position: relative;
    width: 1900px;
    text-align: center;
}

.chart-title {
    margin: 0;
    font-size: 22.500px;
    line-height: 30px;
    font-weight: 700;
    color: #333;
}

.chart-sub {
    margin: 8px 0 0;
    font-size: 15px;
    line-height: 18px;
    color: #aaa;
}

.worldmap {
    display: block;
    margin: 0 auto;
}

.worldmap path,
.worldmap ellipse {
    stroke: #666;
    stroke-width: .8px;
    stroke-linejoin: round;
    vector-effect: non-scaling-stroke;
}

.c1 { fill: #7cff17; }
.c2 { fill: #e1ff1f; }
.c3 { fill: #ffd35c; }
.c4 { fill: #ff9a76; }
.c5 { fill: #ff7a4f; }
.c6 { fill: #ff3a3a; }
.c7 { fill: #ff2222; }
.c8 { fill: #ff0000; }

.worldmap .blank {
    fill: #eeeeee;
}

.legend {
    position: absolute;
    left: 6px;
    top: 391px;
    margin: 0;
    padding: 0;
    list-style: none;
    text-align: left;
    font-size: 15.500px;
    color: #333;
}

.legend li {
    display: flex;
    align-items: center;
    height: 30px;
}

.swatch {
    width: 25px;
    height: 18px;
    margin-top: 2px;
    border-radius: 4px;
    margin-right: 14px;
}

.sw1 { background: #7cff17; }
.sw2 { background: #e1ff1f; }
.sw3 { background: #ffd35c; }
.sw4 { background: #ff9a76; }
.sw5 { background: #ff7a4f; }
.sw6 { background: #ff3a3a; }
.sw7 { background: #ff2222; }
.sw8 { background: #ff0000; }

.btn-group {
    width: 372px;
    height: 46px;
    margin: 77px 0 0 774px;
    background: #6c757d;
    border-radius: 5px;
    display: flex;
    align-items: center;
    padding-left: 16px;
    gap: 30px;
}

.btn-group button {
    padding: 0;
    border: none;
    background: none;
    color: #fff;
    font: inherit;
    font-size: 20px;
}

/* taskbar */
.taskbar {
    flex: none;
    height: 50px;
    background: #202224;
    color: #fff;
    display: flex;
    align-items: center;
    font-size: 15.600px;
}

.tb-win {
    width: 20px;
    height: 20px;
    margin-left: 20px;
}

.tb-search {
    width: 20px;
    height: 20px;
    margin-left: 40px;
}

.tb-tasks {
    width: 20px;
    height: 20px;
    margin-left: 40px;
}

.tb-code {
    width: 30px;
    height: 30px;
    margin-left: 38px;
}

.tb-hb {
    width: 25px;
    height: 28px;
    margin-left: 35px;
}

.hb-letter {
    font-size: 18px;
    fill: #fff;
    text-anchor: middle;
}

.ae-letter {
    font-size: 14px;
    font-weight: 700;
    fill: #c89bf5;
    text-anchor: middle;
}

.tb-app {
    height: 50px;
    display: flex;
    align-items: center;
    gap: 6px;
    white-space: nowrap;
    padding-top: 3px;
    border-bottom: 3px solid #ff88cc;
}

.tb-app-icon {
    width: 27px;
    height: 27px;
}

.tb-npm {
    width: 190px;
    margin-left: 25px;
    padding-left: 9px;
}

.tb-chrome {
    width: 200px;
    margin-left: 6px;
    padding-left: 14px;
    background: #4f5052;
}

.tb-ae {
    width: 190px;
    margin-left: 6px;
    padding-left: 9px;
}

.tray {
    margin-left: auto;
    display: flex;
    align-items: center;
    height: 50px;
}

.tr-chev {
    width: 16px;
    height: 10px;
}

.tr-wifi {
    width: 16px;
    height: 16px;
    margin-left: 15px;
}

.tr-batt {
    width: 20px;
    height: 14px;
    margin-left: 11px;
}

.tr-red {
    width: 18px;
    height: 18px;
    margin-left: 11px;
}

.tr-vol {
    width: 20px;
    height: 16px;
    margin-left: 11px;
}

.tr-pen {
    width: 20px;
    height: 20px;
    margin-left: 15px;
}

.clock {
    width: 104px;
    margin-left: 9px;
    display: flex;
    flex-direction: column;
    align-items: center;
    font-size: 16px;
    line-height: 23px;
    color: #eee;
}

.tr-note {
    width: 20px;
    height: 19px;
    margin-left: 15px;
}

.tr-edge {
    width: 1px;
    height: 50px;
    margin-left: 25px;
    margin-right: 4px;
    background: #55575a;
}

.bs-letter {
    font-size: 15px;
    font-weight: 700;
    fill: #fff;
    text-anchor: middle;
}
```
